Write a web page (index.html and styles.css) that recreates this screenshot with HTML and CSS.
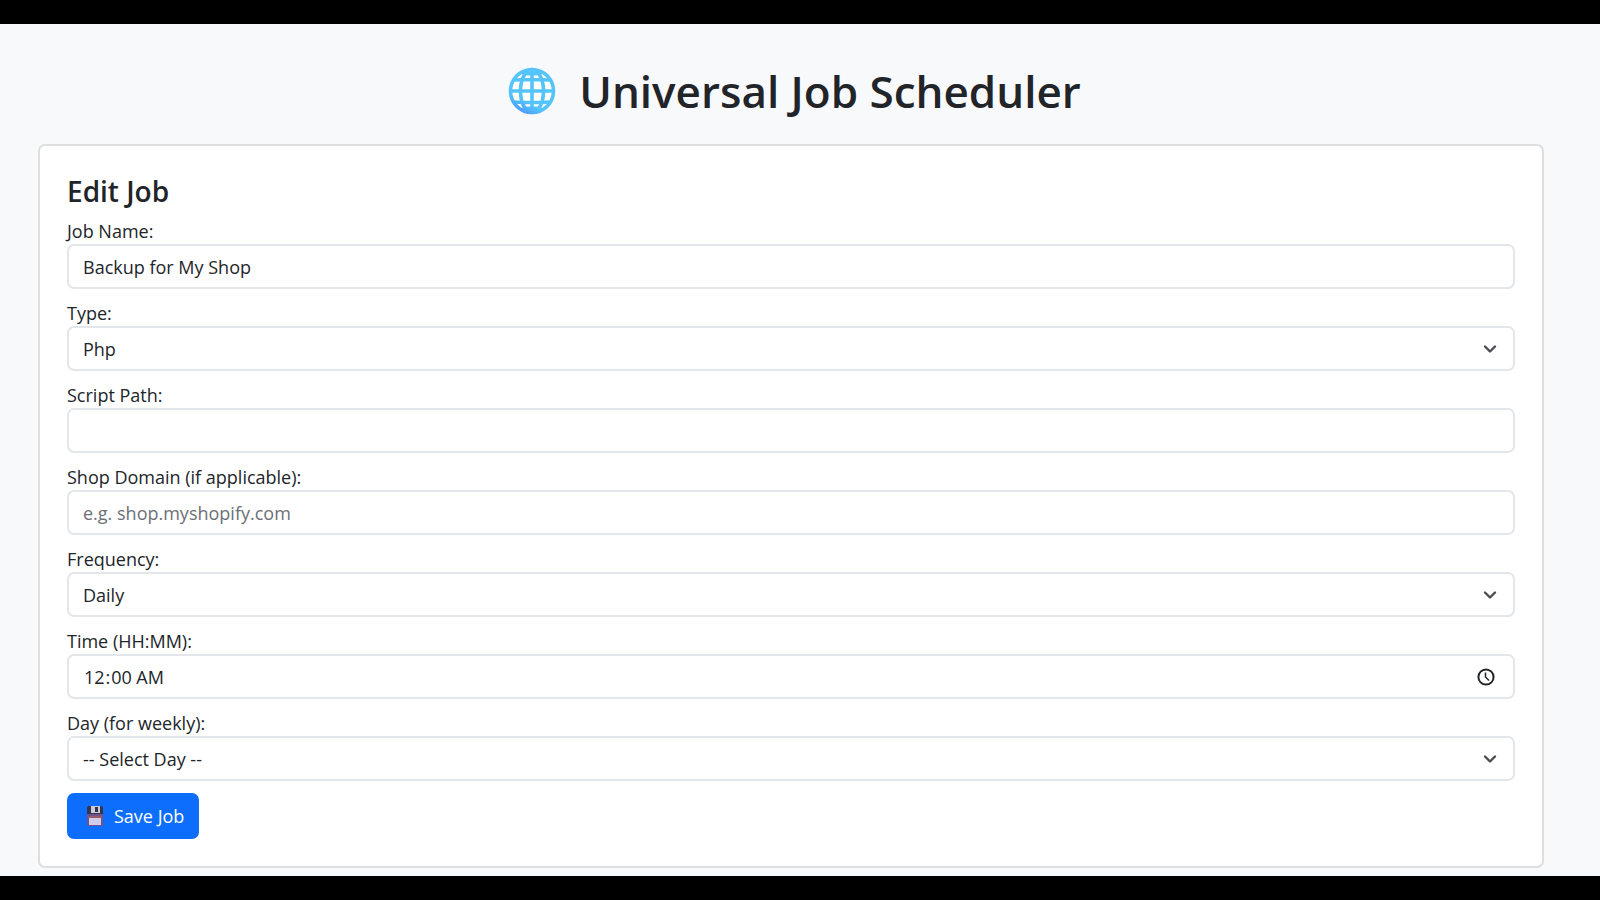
FILE: index.html
```
<!DOCTYPE html>
<html lang="en">
  <head>
    <meta charset="utf-8">
    <meta name="viewport" content="width=device-width, initial-scale=1">
    <title>Universal Job Scheduler</title>
    <link rel="stylesheet" href="styles.css">
  </head>
  <body>
    <main class="container">
      <h1 class="title">
        <svg class="globe" viewBox="0 0 48 48" aria-hidden="true">
          <defs>
            <linearGradient id="sea" gradientUnits="userSpaceOnUse" x1="34" y1="4" x2="12" y2="44">
              <stop offset="0.75" stop-color="#55c4fc"/>
              <stop offset="1" stop-color="#4b9ffa"/>
            </linearGradient>
          </defs>
          <circle cx="24" cy="24" r="21.5" fill="#fff"/>
          <g fill="none" stroke="url(#sea)" stroke-width="3.6">
            <circle cx="24" cy="24" r="21.5"/>
            <ellipse cx="24" cy="24" rx="11.5" ry="21.5"/>
            <path d="M24 2.5V45.5M2.5 24H45.5M6 13Q24 12 42 13M6 35Q24 36 42 35"/>
            <path d="M13 5Q24 9 35 5M13 43Q24 39 35 43"/>
          </g>
        </svg>
        Universal Job Scheduler
      </h1>
      <form class="card" action="#" method="post">
        <h2 class="card-title">Edit Job</h2>
        <div class="field">
          <label for="name">Job Name:</label>
          <input class="control" type="text" id="name" name="name" value="Backup for My Shop">
        </div>
        <div class="field">
          <label for="type">Type:</label>
          <select class="control select" id="type" name="type">
            <option value="php" selected>Php</option>
          </select>
        </div>
        <div class="field">
          <label for="script">Script Path:</label>
          <input class="control" type="text" id="script" name="script">
        </div>
        <div class="field">
          <label for="shop">Shop Domain (if applicable):</label>
          <input class="control" type="text" id="shop" name="shop" placeholder="e.g. shop.myshopify.com">
        </div>
        <div class="field">
          <label for="frequency">Frequency:</label>
          <select class="control select" id="frequency" name="frequency">
            <option value="daily" selected>Daily</option>
          </select>
        </div>
        <div class="field">
          <label for="time">Time (HH:MM):</label>
          <input class="control" type="time" id="time" name="time" value="00:00">
        </div>
        <div class="field">
          <label for="day">Day (for weekly):</label>
          <select class="control select" id="day" name="day">
            <option value="" selected>-- Select Day --</option>
          </select>
        </div>
        <button class="save" type="submit">
          <svg class="floppy" viewBox="0 0 18 20" aria-hidden="true">
            <path d="M1 1.5Q1 0 2.5 0H15.5L17 1.5V18.5Q17 20 15.5 20H2.5Q1 20 1 18.5Z" fill="#73518a"/>
            <path d="M1 1.5Q1 0 2.5 0H15.5L17 1.5V8H1Z" fill="#343650"/>
            <path d="M5 0H14V7H5Z" fill="#c9cbd6"/>
            <path d="M9 1H12V6H9Z" fill="#34344c"/>
            <path d="M2 10H16V12H2Z" fill="#985b6c"/>
            <path d="M3 12H15V19H3Z" fill="#d0cdeb"/>
          </svg>
          Save Job
        </button>
      </form>
    </main>
  </body>
</html>
```
FILE: styles.css
```
* {
    box-sizing: border-box;
}
body {
    margin: 0; min-height: 100vh;
    border: solid #000; border-width: 24px 0;
    background: #f8f9fb; color: #212529;
    font-family: "Open Sans", "Noto Sans", sans-serif;
    font-size: 18px; line-height: 24px;
}
.container {
    padding: 35px 56px 8px 38px;
}
.title {
    display: flex; align-items: center; justify-content: center; gap: 23px;
    margin: 0 0 21px; padding-left: 7px;
    font-size: 44px; font-weight: 600; line-height: 64px;
}
.globe {
    width: 48px; height: 48px;
}
.card {
    padding: 27px;
    background: #fff; border: 2px solid #dcdee0; border-radius: 7px;
}
.card-title {
    margin: 0 0 10px;
    font-size: 28px; font-weight: 600; line-height: 36px;
}
.field {
    margin-bottom: 12px;
}
.field label {
    display: block; margin-bottom: 1px;
}
.control {
    display: block; width: 100%; height: 45px;
    padding: 0 14px;
    background-color: #fff; color: #212529;
    border: 2px solid #e3e7eb; border-radius: 7px;
    font: inherit;
}
.control::placeholder {
    color: #6c7075; opacity: 1;
}
.select {
    appearance: none;
    background-image: url("data:image/svg+xml,%3Csvg xmlns='http://www.w3.org/2000/svg' viewBox='0 0 16 16'%3E%3Cpath d='M3 5.5l5 5 5-5' fill='none' stroke='%23494d52' stroke-width='2.4' stroke-linecap='round' stroke-linejoin='round'/%3E%3C/svg%3E");
    background-repeat: no-repeat;
    background-position: right 15px center;
    background-size: 16px 16px;
}
.control::-webkit-datetime-edit,
.control::-webkit-datetime-edit-fields-wrapper {
    padding: 0;
}
.control::-webkit-calendar-picker-indicator {
    width: 18px; height: 18px; padding: 0; margin-right: 4px;
    background: url("data:image/svg+xml,%3Csvg xmlns='http://www.w3.org/2000/svg' viewBox='0 0 18 18' fill='none' stroke='%23212529'%3E%3Ccircle cx='9' cy='9' r='7.6' stroke-width='2'/%3E%3Cpath d='M8.5 4.5V9L12 12.5' stroke-width='1.5'/%3E%3C/svg%3E") center / 18px 18px no-repeat;
}
.save {
    display: flex; align-items: center; gap: 10px;
    height: 46px; padding: 0 15px 0 19px;
    background: #0d6efd; color: #fff;
    border: 0; border-radius: 7px;
    font: inherit;
}
.floppy {
    width: 18px; height: 20px;
}
```
